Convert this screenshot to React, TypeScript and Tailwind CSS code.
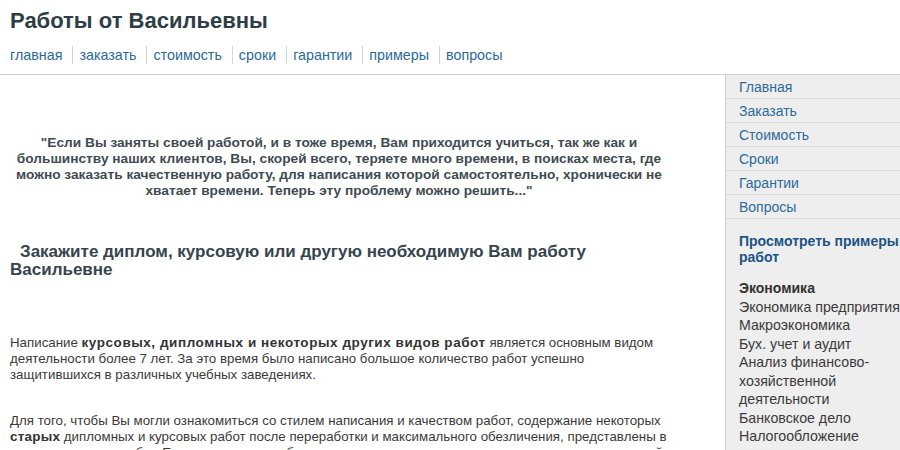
const NAV = ["главная", "заказать", "стоимость", "сроки", "гарантии", "примеры", "вопросы"];

const MENU = ["Главная", "Заказать", "Стоимость", "Сроки", "Гарантии", "Вопросы"];

const ECONOMY = [
  "Экономика предприятия",
  "Макроэкономика",
  "Бух. учет и аудит",
  "Анализ финансово-хозяйственной деятельности",
  "Банковское дело",
  "Налогообложение",
  "Маркетинг",
  "Менеджмент",
];

export default function App() {
  return (
    <div className="w-[900px] h-[450px] overflow-hidden bg-white font-['Liberation_Sans',Arial,sans-serif]">
      {/* Header */}
      <header className="border-b border-[#cfcfcf] pt-[7px] pb-[10px]">
        <h1 className="px-[10px] text-[22px] leading-[27px] font-bold text-[#2f3e46]">
          Работы от Васильевны
        </h1>
        <nav className="mt-[12px] flex px-[10px] text-[14.3px] leading-[18px] text-[#2b6a99]">
          {NAV.map((label, i) => (
            <a
              key={label}
              href="#"
              className={
                i === 0
                  ? "pr-[10px]"
                  : "border-l border-[#d4d4d4] pl-[6px] pr-[10px]"
              }
            >
              {label}
            </a>
          ))}
        </nav>
      </header>

      <div className="flex">
        {/* Main column */}
        <main className="w-[725px] shrink-0 pl-[10px] pr-[57px]">
          <p className="mt-[60px] text-center text-[13.7px] leading-[16px] font-bold text-[#3f4b52]">
            "Если Вы заняты своей работой, и в тоже время, Вам приходится учиться, так же как и
            большинству наших клиентов, Вы, скорей всего, теряете много времени, в поисках места, где
            можно заказать качественную работу, для написания которой самостоятельно, хронически не
            хватает времени. Теперь эту проблему можно решить..."
          </p>

          <h2 className="mt-[44px] indent-[10px] text-[17px] leading-[18px] font-bold text-[#36454d]">
            Закажите диплом, курсовую или другую необходимую Вам работу Васильевне
          </h2>

          <p className="mt-[56px] text-[13.3px] leading-[16px] text-[#3a3a3a]">
            Написание{" "}
            <b className="text-[13.5px] tracking-[0.55px] text-[#333]">
              курсовых, дипломных и некоторых других видов работ
            </b>{" "}
            является основным видом деятельности более 7 лет. За это время было написано большое
            количество работ успешно защитившихся в различных учебных заведениях.
          </p>

          <p className="mt-[30px] text-[13.3px] leading-[16px] text-[#3a3a3a]">
            Для того, чтобы Вы могли ознакомиться со стилем написания и качеством работ, содержание
            некоторых <b className="text-[13.5px] tracking-[0.2px] text-[#333]">старых</b> дипломных и
            курсовых работ после переработки и максимального обезличения, представлены в архиве примеров
            работ. Естественно, что работы, написанные в последнее время выставить в открытый доступ нельзя.
          </p>
        </main>

        {/* Sidebar */}
        <aside className="w-[200px] shrink-0 h-[380px] border-l border-[#d0d0d0] bg-[#eeeeee] text-[14px]">
          <ul>
            {MENU.map((label) => (
              <li key={label} className="h-[24px] border-b border-[#d9d9d9] pl-[13px] leading-[24px] text-[#2c6a9a]">
                {label}
              </li>
            ))}
          </ul>
          <div className="pl-[13px] pr-[10px]">
            <a href="#" className="mt-[14px] block font-bold leading-[16px] text-[#1d5383]">
              Просмотреть примеры работ
            </a>
            <div className="mt-[14px] font-bold leading-[18.5px] text-[#333]">Экономика</div>
            <ul className="text-[14.2px] leading-[18.5px] text-[#3a3a3a]">
              {ECONOMY.map((label) => (
                <li key={label}>{label}</li>
              ))}
            </ul>
          </div>
        </aside>
      </div>
    </div>
  );
}
